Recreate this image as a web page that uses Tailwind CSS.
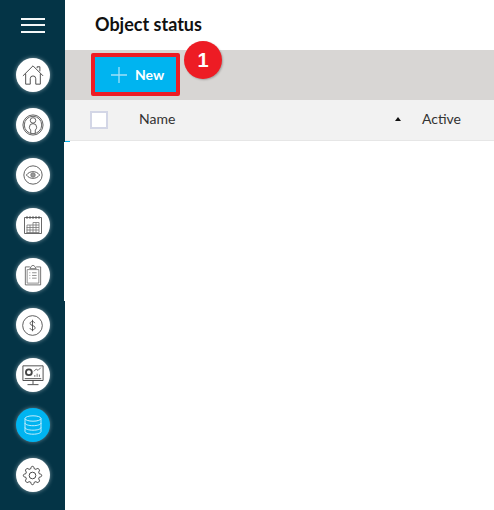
<!DOCTYPE html>
<html><head><meta charset="utf-8"><script src="https://cdn.jsdelivr.net/npm/@tailwindcss/browser@4"></script></head>
<body class="bg-white">
<div class="w-[494px] h-[510px] overflow-hidden flex font-['Lato','Noto_Sans',sans-serif] relative">
<aside class="w-[65px] h-[510px] bg-[#043446] flex flex-col items-center shrink-0">
  <div class="h-[50px] flex flex-col justify-center gap-[4.500px] w-[24px] shrink-0 ml-[1px]">
    <span class="h-[2px] bg-[#f4f7f8] block"></span><span class="h-[2px] bg-[#f4f7f8] block"></span><span class="h-[2px] bg-[#f4f7f8] block"></span>
  </div>
  <div class="flex flex-col gap-[16px] pt-[8px]">
    <div class="w-[34px] h-[34px] rounded-full bg-white shadow-[0_0_4px_rgba(255,255,255,0.5)] flex items-center justify-center">
      <svg width="22" height="22" viewBox="0 0 24 24" fill="none" stroke="#444" stroke-width="1"><path d="M1 13 12 2l11 11M4 10.500V22h5v-6a3 3 0 0 1 6 0v6h5V10.500M16.500 4.500V3h3v5"/></svg>
    </div>
    <div class="w-[34px] h-[34px] rounded-full bg-white shadow-[0_0_4px_rgba(255,255,255,0.5)] flex items-center justify-center">
      <svg width="22" height="22" viewBox="0 0 24 24" fill="none" stroke="#444" stroke-width="0.900"><circle cx="12" cy="12" r="11"/><circle cx="12" cy="12" r="9.500"/><circle cx="12" cy="7" r="3"/><path d="M9.500 21v-3.500a4 4 0 0 1-1.500-3 4 4 0 0 1 8 0 4 4 0 0 1-1.500 3V21"/></svg>
    </div>
    <div class="w-[34px] h-[34px] rounded-full bg-white shadow-[0_0_4px_rgba(255,255,255,0.5)] flex items-center justify-center">
      <svg width="20" height="20" viewBox="0 0 24 24" fill="none" stroke="#444" stroke-width="1"><circle cx="12" cy="12" r="11"/><path d="M4 12c2.500-3 5-4 8-4s5.500 1 8 4c-2.500 3-5 4-8 4s-5.500-1-8-4Z"/><circle cx="12" cy="12" r="2.700" fill="#999" stroke="#777"/></svg>
    </div>
    <div class="w-[34px] h-[34px] rounded-full bg-white shadow-[0_0_4px_rgba(255,255,255,0.5)] flex items-center justify-center">
      <svg width="20" height="20" viewBox="0 0 20 20" fill="none" stroke="#444" stroke-width="0.800"><path d="M1.500 2.500h17v16h-17zM4 1v3M7 1v3M10 1v3M13 1v3M16 1v3"/><path stroke="#777" d="M3.500 12.500h12.500M3.500 15h12.500M3.500 17.500h12.500M4 10v8M7 10v8M10 7.500v10.500M13 7.500v10.500M16 7.500v10.500M10 7.500h6M10 10h6M4 10h6"/></svg>
    </div>
    <div class="w-[34px] h-[34px] rounded-full bg-white shadow-[0_0_4px_rgba(255,255,255,0.5)] flex items-center justify-center">
      <svg width="18" height="22" viewBox="0 0 20 24" fill="none" stroke="#555" stroke-width="0.900"><path d="M6.500 3H1.500v20h17V3h-5"/><path d="M6.500 5 8 2.500c1-1.500 3-1.500 4 0L13.500 5z"/><path stroke="#777" d="M3.500 6h13v15h-13zM6 9.500h1M9 9.500h5M6 12.500h1M9 12.500h5M6 15.500h1M9 15.500h5"/></svg>
    </div>
    <div class="w-[34px] h-[34px] rounded-full bg-white shadow-[0_0_4px_rgba(255,255,255,0.5)] flex items-center justify-center">
      <svg width="21" height="21" viewBox="0 0 22 22" fill="none" stroke="#444" stroke-width="0.900"><circle cx="11" cy="11" r="10.300"/><path d="M13.500 8.500c-.500-1-1.500-1.700-2.500-1.700-1.500 0-2.500.8-2.500 2 0 2.800 5.200 1.700 5.200 4.500 0 1.300-1.200 2.200-2.700 2.200-1.200 0-2.300-.6-2.800-1.700M11 5v12"/></svg>
    </div>
    <div class="w-[34px] h-[34px] rounded-full bg-white shadow-[0_0_4px_rgba(255,255,255,0.5)] flex items-center justify-center">
      <svg width="22" height="22" viewBox="0 0 24 24" fill="none" stroke="#444" stroke-width="1"><path d="M1 2h22v16H1zM12 18v4M6 22.500h12"/><path d="M3 16h18"/><circle cx="7.500" cy="9" r="3.200" stroke-width="2"/><path d="M13 8l2.500-2.500 2 1.500 3-3M14 14v-2M16.500 14v-3.500M19 14v-2.500" stroke="#666"/></svg>
    </div>
    <div class="w-[34px] h-[34px] rounded-full bg-[#00b4f0] shadow-[0_0_4px_rgba(255,255,255,0.4)] flex items-center justify-center">
      <svg width="18" height="20" viewBox="0 0 18 20" fill="none" stroke="#d8f3fd" stroke-width="0.900"><ellipse cx="9" cy="3.500" rx="8" ry="2.700"/><path d="M1 3.500v13c0 1.500 3.600 2.700 8 2.700s8-1.200 8-2.700v-13M1 8c0 1.500 3.600 2.700 8 2.700S17 9.500 17 8M1 12.500c0 1.500 3.600 2.700 8 2.700s8-1.200 8-2.700"/></svg>
    </div>
    <div class="w-[34px] h-[34px] rounded-full bg-white shadow-[0_0_4px_rgba(255,255,255,0.5)] flex items-center justify-center">
      <svg width="21" height="21" viewBox="0 0 24 24" fill="none" stroke="#333" stroke-width="1"><circle cx="12" cy="12" r="3.800"/><path d="M12 1.500c.9 0 1.400.5 1.600 1.300l.3 1.400 2 .8 1.200-.8c.7-.4 1.400-.3 2 .3l.4.400c.6.600.7 1.300.3 2l-.8 1.200.8 2 1.400.3c.8.200 1.300.7 1.300 1.600s-.5 1.400-1.300 1.600l-1.400.3-.8 2 .8 1.200c.4.700.3 1.400-.3 2l-.4.400c-.6.600-1.300.7-2 .3l-1.200-.8-2 .8-.3 1.400c-.2.800-.7 1.300-1.600 1.300s-1.400-.5-1.600-1.300l-.3-1.400-2-.8-1.200.8c-.7.400-1.400.3-2-.3l-.4-.4c-.6-.6-.7-1.300-.3-2l.8-1.200-.8-2-1.400-.3C2 13.400 1.500 12.900 1.500 12s.5-1.400 1.300-1.600l1.400-.3.8-2-.8-1.200c-.4-.7-.3-1.400.3-2l.4-.4c.6-.6 1.300-.7 2-.3l1.200.8 2-.8.3-1.400c.2-.8.700-1.300 1.600-1.300Z"/></svg>
    </div>
  </div>
</aside>
<main class="flex-1 min-w-0">
  <div class="h-[50px] pl-[30px] flex items-center"><h1 class="text-[18px] font-bold text-[#111] pb-[1px]">Object status</h1></div>
  <div class="h-[50px] bg-[#d8d6d4] pl-[26px] flex items-start pt-[3px]">
    <button class="w-[89px] h-[43px] bg-[#00b4f0] border-[4px] border-[#ed1c24] rounded-[2px] flex items-center pl-[15px] gap-[7px] text-white font-bold text-[14px]">
      <svg width="18" height="18" viewBox="0 0 18 18" stroke="#9fe0f8" stroke-width="1.300"><path d="M9 1v16M1 9h16"/></svg>
      New
    </button>
  </div>
  <div class="h-[41px] bg-[#f2f2f2] border-b border-[#e6e6e6] flex items-center pb-[3px] text-[14px] text-[#333] relative">
    <span class="w-[18px] h-[18px] ml-[25px] bg-white border-2 border-[#d3d6e6] block mt-[2px]"></span>
    <span class="ml-[31px]">Name</span>
    <span class="ml-auto w-0 h-0 border-x-[3px] border-x-transparent border-b-[4px] border-b-[#111]"></span>
    <span class="ml-[21px] mr-[33px]">Active</span>
  </div>
</main>
<div class="absolute left-[184px] top-[41px] w-[38px] h-[38px] rounded-full bg-[#ed1c24] text-white font-bold text-[20px] font-['Liberation_Sans',sans-serif] flex items-center justify-center shadow-[1px_1px_2px_rgba(0,0,0,0.25)]">1</div>
<div class="absolute left-[65px] top-[141px] w-[5px] h-[1px] bg-[#00b4f0]"></div>
<div class="absolute left-[64px] top-[142px] w-[1px] h-[159px] bg-white"></div>
</div>
</body></html>
